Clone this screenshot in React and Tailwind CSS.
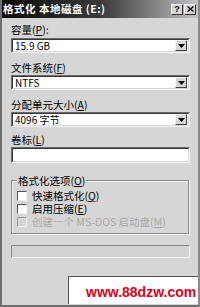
import React from "react";

const cjk = { fontFamily: '"Noto Sans CJK SC", "Liberation Sans", sans-serif' };

function U({ children }) {
  return <span className="underline underline-offset-1">{children}</span>;
}

function Combo({ value }) {
  return (
    <div className="flex h-[15px] w-[179px] border border-t-[#6a6a6a] border-l-[#6a6a6a] border-b-[#f4f4f4] border-r-[#f4f4f4]">
      <div className="flex flex-1 items-center bg-white border border-t-[#3a3a3a] border-l-[#3a3a3a] border-b-[#d8d8d8] border-r-[#d8d8d8] pl-[2px]">
        <span className="text-[10px] leading-none text-black" style={cjk}>{value}</span>
        <div className="ml-auto mr-[1px] flex h-[11px] w-[12px] items-center justify-center bg-[#d6d6d6] border border-t-[#f4f4f4] border-l-[#f4f4f4] border-b-[#404040] border-r-[#404040]">
          <svg width="7" height="4" viewBox="0 0 7 4"><path d="M0 0h7L3.5 4z" fill="#000" /></svg>
        </div>
      </div>
    </div>
  );
}

function Check({ label, disabled }) {
  return (
    <div className="flex items-center gap-[5px] h-[13px] overflow-hidden">
      <div className={"h-[10px] w-[10px] shrink-0 border " + (disabled ? "bg-[#d6d6d6] border-t-[#9a9a9a] border-l-[#9a9a9a] border-b-[#f4f4f4] border-r-[#f4f4f4]" : "bg-white border-t-[#555] border-l-[#555] border-b-[#f4f4f4] border-r-[#f4f4f4]")} />
      <span className={"text-[10.5px] leading-[13px] " + (disabled ? "text-[#a8a8a8]" : "text-black")} style={cjk}>{label}</span>
    </div>
  );
}

const lbl = "h-[13px] text-[10.5px] leading-[13px] text-black";

export default function App() {
  return (
    <div className="relative h-[307px] w-[200px] overflow-hidden bg-[#d6d6d6] border-l-2 border-b-2 border-r-2 border-[#6e6e6e] border-r-[#8a8a8a]">
      {/* title bar */}
      <div className="flex h-[18px] items-center bg-gradient-to-r from-[#0c0c0c] via-[#3a3a3a] to-[#c4c4c4] pl-[1px] pr-[2px]">
        <span className="text-[10.5px] font-bold leading-none text-white tracking-[0.5px]" style={cjk}>格式化 本地磁盘 (E:)</span>
        <div className="ml-auto flex gap-[1px]">
          <div className="flex h-[11px] w-[12px] items-center justify-center bg-[#d6d6d6] border border-t-[#f4f4f4] border-l-[#f4f4f4] border-b-[#303030] border-r-[#303030]">
            <span className="text-[9px] font-bold leading-none text-black" style={{ fontFamily: '"Liberation Sans", sans-serif' }}>?</span>
          </div>
          <div className="flex h-[11px] w-[12px] items-center justify-center bg-[#d6d6d6] border border-t-[#f4f4f4] border-l-[#f4f4f4] border-b-[#303030] border-r-[#303030]">
            <svg width="7" height="6" viewBox="0 0 7 6"><path d="M0.5 0.5L6.5 5.5M6.5 0.5L0.5 5.5" stroke="#000" strokeWidth="1.4" /></svg>
          </div>
        </div>
      </div>

      <div className="flex flex-col pl-[9px]">
        <div className={"mt-[5px] " + lbl} style={cjk}>容量(<U>P</U>):</div>
        <div className="mt-[2px]"><Combo value="15.9 GB" /></div>

        <div className={"mt-[8px] " + lbl} style={cjk}>文件系统(<U>F</U>)</div>
        <div className="mt-[1px]"><Combo value="NTFS" /></div>

        <div className={"mt-[8px] " + lbl} style={cjk}>分配单元大小(<U>A</U>)</div>
        <div className="mt-[1px]"><Combo value="4096 字节" /></div>

        <div className={"mt-[6px] " + lbl} style={cjk}>卷标(<U>L</U>)</div>
        <div className="mt-[1px] h-[16px] w-[179px] border border-t-[#6a6a6a] border-l-[#6a6a6a] border-b-[#f4f4f4] border-r-[#f4f4f4]">
          <div className="h-full w-full bg-white border border-t-[#3a3a3a] border-l-[#3a3a3a] border-b-[#d8d8d8] border-r-[#d8d8d8]" />
        </div>

        {/* group box */}
        <div className="relative mt-[17px] h-[54px] w-[178px] border border-[#8a8a8a] shadow-[1px_1px_0_#f4f4f4,inset_1px_1px_0_#f4f4f4]">
          <div className="absolute -top-[7px] left-[5px] bg-[#d6d6d6] px-[1px] text-[10.5px] leading-[13px] text-black" style={cjk}>格式化选项(<U>O</U>)</div>
          <div className="flex flex-col pl-[5px] pt-[8px]">
            <Check label={<>快速格式化(<U>Q</U>)</>} />
            <Check label={<>启用压缩(<U>E</U>)</>} />
            <Check label={<>创建一个 MS-DOS 启动盘(<U>M</U>)</>} disabled />
          </div>
        </div>

        {/* progress */}
        <div className="mt-[11px] h-[13px] w-[179px] border border-t-[#8a8a8a] border-l-[#8a8a8a] border-b-[#f4f4f4] border-r-[#f4f4f4] bg-[#d2d2d2]" />
      </div>

      {/* watermark overlay */}
      <div className="absolute left-[66px] top-[276px] h-[28px] w-[134px] bg-white border-l border-t border-[#555]">
        <div className="absolute left-[17px] top-[8px] text-[14px] font-bold leading-none text-[#e0001a]" style={{ fontFamily: '"Liberation Sans", sans-serif' }}>www.88dzw.com</div>
      </div>
    </div>
  );
}
